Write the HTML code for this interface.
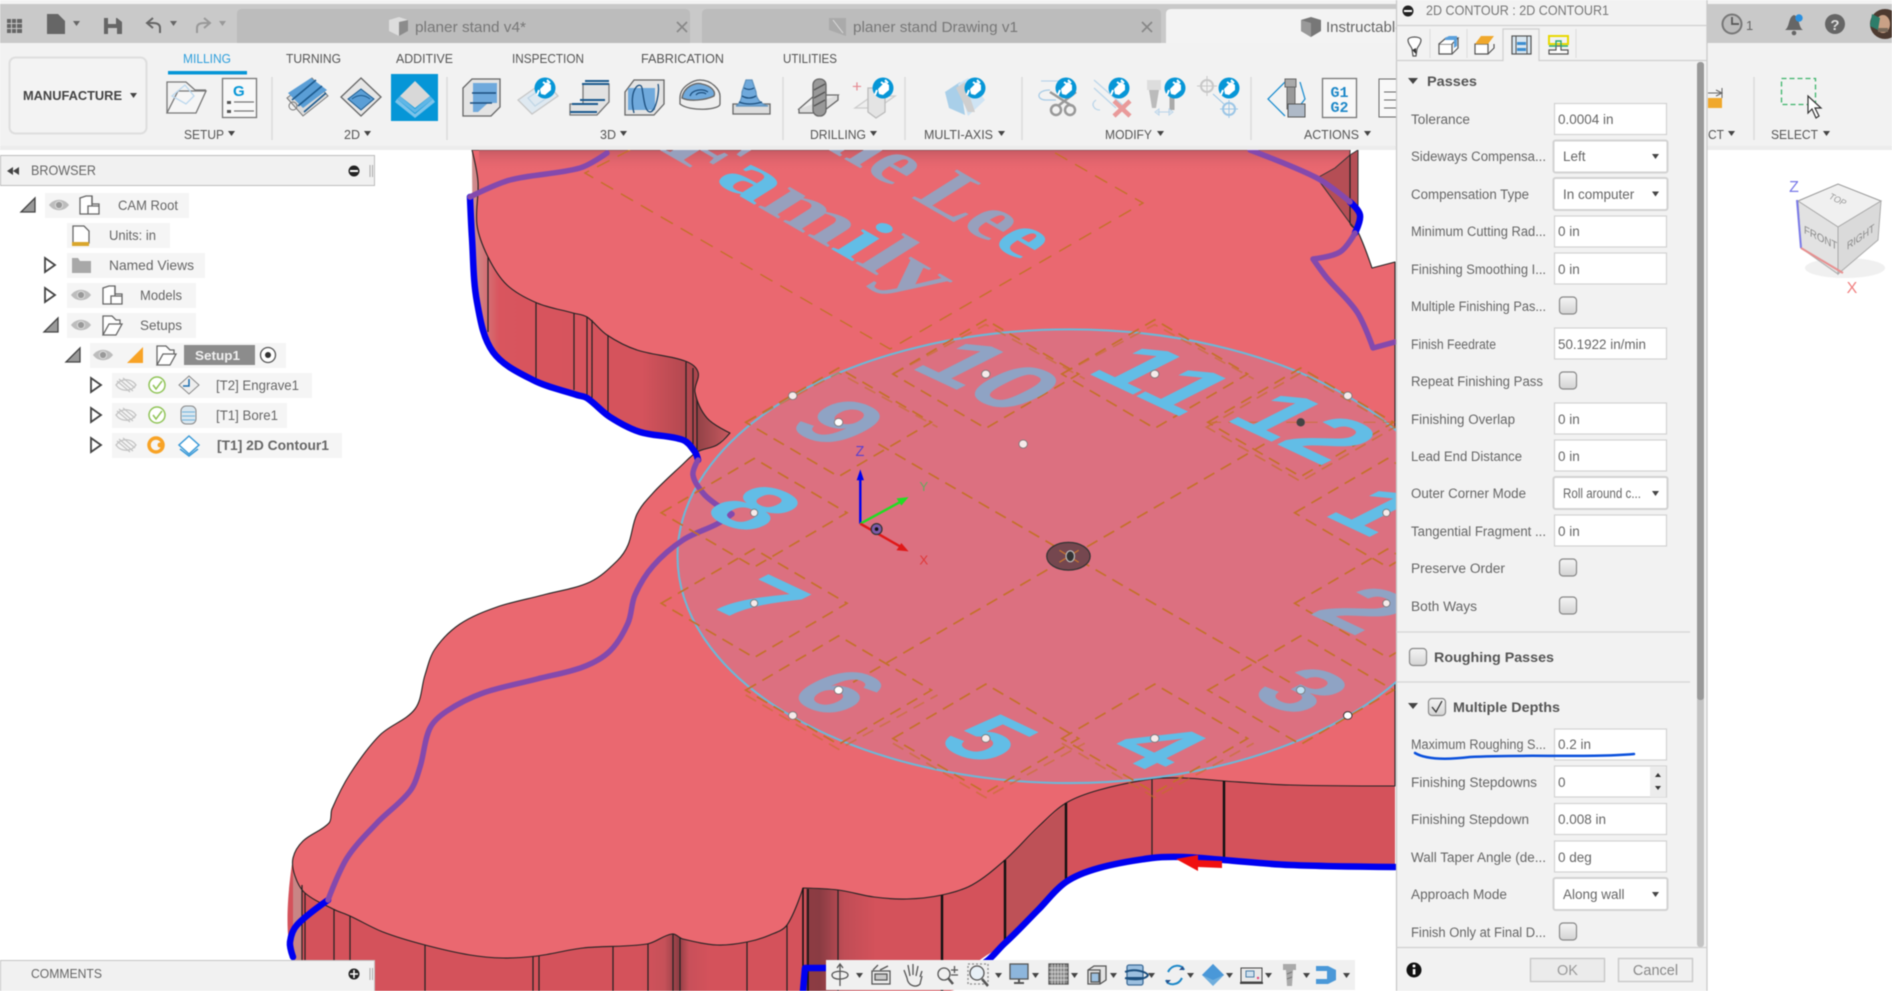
<!DOCTYPE html>
<html><head><meta charset="utf-8"><title>2D Contour</title>
<style>
html,body{margin:0;padding:0;background:#fff;width:1892px;height:991px;overflow:hidden}
svg{display:block;filter:blur(.45px);font-family:"Liberation Sans",sans-serif}
.rb{font-size:13px;fill:#555}
.lb{font-size:13.5px;fill:#666}
.v{font-size:13.5px;fill:#666}
.br{font-size:14px;fill:#666}
.n{font-family:"Liberation Sans",sans-serif;font-weight:bold;font-size:76px;text-anchor:middle}
.g{fill:#8fa3c4}.c{fill:#62bde6}
</style></head><body>
<svg width="1892" height="991" viewBox="0 0 1892 991" xmlns="http://www.w3.org/2000/svg">
<defs>
<linearGradient id="w1" x1="0" x2="1" y1="0" y2="0"><stop offset="0" stop-color="#cf9090"/><stop offset=".12" stop-color="#d9555e"/><stop offset=".75" stop-color="#d4535c"/><stop offset="1" stop-color="#a9454c"/></linearGradient>
<linearGradient id="w2" x1="0" x2="1" y1="0" y2="0"><stop offset="0" stop-color="#d4525b"/><stop offset=".35" stop-color="#c65159"/><stop offset=".55" stop-color="#8e3d44"/><stop offset=".7" stop-color="#c8505a"/><stop offset="1" stop-color="#d4525b"/></linearGradient>
<linearGradient id="w3" x1="0" x2="1" y1="0" y2="0"><stop offset="0" stop-color="#8e3d44"/><stop offset=".2" stop-color="#8a3c43"/><stop offset=".55" stop-color="#c04d56"/><stop offset="1" stop-color="#d4525b"/></linearGradient>
<linearGradient id="sp" x1="0" x2="1" y1="0" y2="0"><stop offset="0" stop-color="#8e4045"/><stop offset="1" stop-color="#c95a60"/></linearGradient>
<linearGradient id="topd" x1="0" x2="0" y1="0" y2="1"><stop offset="0" stop-color="#a84f58" stop-opacity=".55"/><stop offset="1" stop-color="#ea6870" stop-opacity="0"/></linearGradient>
<linearGradient id="cb" x1="0" x2="0" y1="0" y2="1"><stop offset="0" stop-color="#f5f5f5"/><stop offset="1" stop-color="#d4d4d4"/></linearGradient>
<g id="eye"><path d="M-10,0C-5,-7 5,-7 10,0C5,7 -5,7 -10,0Z" fill="#bdbdbd"/><circle r="3.6" fill="#999" stroke="#ddd" stroke-width="1"/></g>
<g id="eyeoff" fill="none" stroke="#c4c4c4" stroke-width="1.3"><path d="M-10,0C-5,-7 5,-7 10,0C5,7 -5,7 -10,0Z"/><path d="M-7,-6L7,6M-9,-4L4,7M-3,-7L9,3"/></g>
<path id="open" d="M0,14L14,14L14,0Z" fill="#9a9a9a" stroke="#444" stroke-width="1.3"/>
<path id="closed" d="M0,0L10,7L0,14Z" fill="#fff" stroke="#444" stroke-width="1.8"/>
<path id="dn" d="M0,0H7L3.5,5Z" fill="#444"/>
<g id="plug"><circle r="10.5" fill="#0696d7"/><path d="M-5,1L2,-6L6,-3L6,2L0,7L-4,6Z" fill="#fff"/><path d="M-2,-6L2,-3M2,-8L5,-5M-6,2L-8,7" stroke="#fff" stroke-width="2"/></g>
<g id="chk"><rect width="17" height="17" x="0" y="0" rx="3.5" fill="url(#cb)" stroke="#888" stroke-width="1.2"/></g>
</defs>

<rect width="1892" height="991" fill="#fff"/>

<!-- VIEWPORT -->
<g>
<!-- upper-left wall -->
<polygon class="sm" points="472,150 478,182 477,225 488,257 507,285 537,303 573,313 587,317 607,335 637,350 685,361 698,372 697,452 683,440 640,432 610,417 587,398 577,395 533,380 493,352 477,302" fill="url(#w1)"/>
<polygon points="695,392 707,418 730,433 717,445 697,452" fill="url(#sp)"/>
<!-- bottom wall -->
<polygon class="sm" points="293,858 295,876 305,893 333,909 350,916 383,932 425,945 470,955 503,958 537,956 583,948 647,944 672,934 683,939 717,945 747,942 770,935 787,925 803,888 838,890 874,897 907,899 942,895 972,885 1005,860 1038,827 1066,803 1099,790 1152,779 1184,778 1224,781 1290,785 1395,786 1395,867 1290,865 1224,860 1184,857 1152,858 1099,868 1066,882 1038,910 1005,943 976,963 950,991 345,991 293,960" fill="#d4525b"/>
<rect x="640" y="925" width="70" height="66" fill="url(#w2)"/>
<rect x="806" y="888" width="70" height="103" fill="url(#w3)"/>
<rect x="293" y="860" width="9" height="100" fill="#c98585"/>
<polygon points="1005,860 1066,803 1066,882 1005,943" fill="#be5157"/>
<!-- surface -->
<polygon class="sm" points="472,150 1350,150 1350,223 1358,232 1372,268 1395,262 1395,786 1290,785 1224,781 1184,778 1152,779 1099,790 1066,803 1038,827 1005,860 972,885 942,895 907,899 874,897 838,890 803,888 787,925 770,935 747,942 717,945 683,939 672,934 647,944 583,948 537,956 503,958 470,955 425,945 383,932 350,916 333,909 305,893 295,876 293,858 303,841 329,823 332,809 350,774 380,735 415,709 425,675 435,649 460,624 497,607 543,595 590,582 617,561 628,545 637,514 653,493 682,465 697,452 717,445 730,433 707,418 695,392 698,372 685,361 637,350 607,335 587,317 573,313 537,303 507,285 488,257 477,225 478,182" fill="#ea6870" stroke="#222" stroke-width="1.1" stroke-linejoin="round"/>
<rect x="479" y="150" width="871" height="22" fill="url(#topd)"/>
<!-- wedge top right -->
<polygon points="1317,178 1335,168 1350,155 1358,150 1358,232 1350,223" fill="#b54e55" stroke="#333" stroke-width="1"/>
<line x1="1350" y1="155" x2="1350" y2="223" stroke="#222" stroke-width="1.2"/>
<!-- wall verticals -->
<g stroke="#222" stroke-width="1.2">
<path d="M488,257V332M536,303V380M574,313V390M587,317V396M592,320V398M608,335V412M686,362V438M693,368V445M697,400V452"/>
<path d="M302,885V960M305,893V965M334,909V991M350,916V991M425,945V991M533,956V991M539,956V991M613,946V991M648,944V991M673,934V991M680,938V991M747,942V991M787,925V991M838,890V991M1152,779V858"/>
</g>
<g stroke="#111"><path stroke-width="1.6" d="M803,888V991M808,889V991"/><path stroke-width="2.4" d="M942,895V991M1005,860V943M1066,803V882M1224,781V860"/></g>
<!-- blue toolpath -->
<g fill="none" stroke="#0000f0" stroke-width="6.5" stroke-linejoin="round" stroke-linecap="round">
<polyline class="sm" points="470,197 472,238 477,302 493,352 533,380 577,395 587,398 610,417 640,432 683,440 695,452 698,460"/>
<polyline class="sm" points="803,991 805,968 825,968 976,966 1005,943 1038,910 1066,882 1099,868 1152,858 1184,857 1224,860 1290,865 1395,867"/>
<polyline class="sm" points="328,900 297,925 290,942 293,957"/>
<polyline points="330,990 350,990"/>
<polyline class="sm" points="1350,202 1360,215 1355,233"/>
</g>
<polygon points="1176,859 1198,855 1198,860 1222,861 1222,868 1198,867 1198,871" fill="#f01010"/>
<!-- text on surface -->
<g font-family="'Liberation Serif',serif" font-weight="bold" font-size="82">
<text transform="matrix(.866 .5 -.84 .53 658 149)" fill="#97a0bd" textLength="305" lengthAdjust="spacingAndGlyphs">F<tspan fill="#62bde6">a</tspan>m<tspan fill="#62bde6">i</tspan>ly</text>
<text transform="matrix(.866 .5 -.84 .53 1021 261)" text-anchor="end" fill="#97a0bd">The Le<tspan fill="#62bde6">e</tspan></text>
</g>
<!-- big dashed diamond around the text -->
<g fill="none" stroke="#c4702a" stroke-width="1.4" stroke-dasharray="14 9"><path d="M630,150L585,173L890,349L1143,203L1050,150"/></g>
<!-- clock -->
<g transform="scale(1.2066)">
<ellipse cx="886.5" cy="461" rx="325" ry="188" fill="#dc7080" stroke="#6cb8d8" stroke-width="1.7"/>
</g>
<g fill="none" stroke="#8449ad" stroke-width="5.5" stroke-linejoin="round" stroke-linecap="round">
<polyline class="sm" points="607,153 580,168 510,180 470,197"/>
<polyline class="sm" points="698,460 693,475 703,493 717,505 732,514 717,524 683,540 653,566 635,595 628,623 610,651 583,667 537,679 483,693 447,711 430,728 420,767 410,791 377,823 347,858 328,900"/>
<polyline class="sm" points="1250,150 1317,178 1350,202"/>
<polyline class="sm" points="1355,233 1340,252 1313,259 1327,278 1357,312 1373,348 1395,342"/>
</g>
<g transform="scale(1.2066)">
<g fill="none" stroke="#c4702a" stroke-width="1.4" stroke-dasharray="10 6">
<path d="M695,350m-77,0l77,-45l77,45l-77,45z"/>
<path d="M817,310m-77,0l77,-45l77,45l-77,45z"/>
<path d="M957,310m-77,0l77,-45l77,45l-77,45z"/>
<path d="M1078,350m-77,0l77,-45l77,45l-77,45z"/>
<path d="M625,425m-77,0l77,-45l77,45l-77,45z"/>
<path d="M625,500m-77,0l77,-45l77,45l-77,45z"/>
<path d="M695,572m-77,0l77,-45l77,45l-77,45z"/>
<path d="M817,612m-77,0l77,-45l77,45l-77,45z"/>
<path d="M957,612m-77,0l77,-45l77,45l-77,45z"/>
<path d="M1078,572m-77,0l77,-45l77,45l-77,45z"/>
<path d="M1150,425m-77,0l77,-45l77,45l-77,45z"/>
<path d="M1150,500m-77,0l77,-45l77,45l-77,45z"/>
<path d="M728,368L1070,566M1048,368L706,566"/>
<path d="M1002,350L1155,350" stroke-width="1" opacity=".7"/>
<path d="M1000,354L1078,309L1156,354L1078,399Z" opacity=".7"/>
<path d="M618,350l77,-41l82,45M740,310l77,-41l82,45M880,310l77,-41l82,45M618,576l77,45l82,-45M740,616l77,45l82,-45M880,616l77,45l82,-45" opacity=".6"/>
</g>
<g>
<text class="n g" transform="matrix(1 .47 -.97 .49 670 363)">9</text>
<text class="n g" transform="matrix(1 .47 -.97 .49 795 324)">10</text>
<text class="n c" transform="matrix(1 .47 -.97 .49 939 327)">11</text>
<text class="n c" transform="matrix(1 .47 -.97 .49 1056 367)">12</text>
<text class="n c" transform="matrix(1 .47 -.97 .49 600 434)">8</text>
<text class="n c" transform="matrix(1 .47 -.97 .49 604 510)">7</text>
<text class="n g" transform="matrix(1 .47 -.97 .49 670 586)">6</text>
<text class="n c" transform="matrix(1 .47 -.97 .49 794 625)">5</text>
<text class="n c" transform="matrix(1 .47 -.97 .49 935 631)">4</text>
<text class="n g" transform="matrix(1 .47 -.97 .49 1054 585)">3</text>
<text class="n c" transform="matrix(1 .47 -.97 .49 1116 436)">1</text>
<text class="n g" transform="matrix(1 .47 -.97 .49 1105 518)">2</text>
</g>
<g fill="#f6eaea" stroke="#777" stroke-width=".7">
<ellipse cx="695" cy="350" rx="3.5" ry="3.2" fill="#fff"/><ellipse cx="817" cy="310" rx="3.5" ry="3.2"/><ellipse cx="957" cy="310" rx="3.5" ry="3.2"/>
<ellipse cx="625" cy="425" rx="3" ry="3"/><ellipse cx="625" cy="500" rx="3" ry="3"/><ellipse cx="695" cy="572" rx="3.5" ry="3.2" fill="#fff"/>
<ellipse cx="817" cy="612" rx="3.5" ry="3.2"/><ellipse cx="957" cy="612" rx="3.5" ry="3.2"/><ellipse cx="1078" cy="572" rx="3.5" ry="3.2" fill="#bfe0f2"/>
<ellipse cx="657" cy="328" rx="3.5" ry="3.2"/><ellipse cx="1117" cy="328" rx="3.5" ry="3.2"/><ellipse cx="657" cy="593" rx="3.5" ry="3.2"/><ellipse cx="1117" cy="593" rx="3.5" ry="3.2" fill="#fff" stroke="#222"/>
<ellipse cx="848" cy="368" rx="3.5" ry="3.4"/><ellipse cx="1149" cy="425" rx="3" ry="3"/><ellipse cx="1149" cy="500" rx="3" ry="3"/>
</g>
<ellipse cx="1078" cy="350" rx="3.5" ry="3.5" fill="#444"/>
<ellipse cx="885.5" cy="461" rx="18" ry="11.5" fill="#75474f" stroke="#333" stroke-width="1"/>
<path d="M878,456L894,466M894,456L878,466" stroke="#c8762d" stroke-width="1"/>
<ellipse cx="887" cy="461" rx="3.5" ry="4.5" fill="#333" stroke="#bbb"/>
<!-- axes -->
<path d="M713,434V395" stroke="#0000f0" stroke-width="2"/><path d="M713,389l-3,9h6z" fill="#0000f0"/>
<path d="M713,434L748,415" stroke="#22dd22" stroke-width="2"/><path d="M753,412l-10,1 4,6z" fill="#22dd22"/>
<path d="M713,434L748,454" stroke="#e01818" stroke-width="2"/><path d="M753,457l-10,-1 4,-6z" fill="#e01818"/>
<ellipse cx="726.500" cy="438.500" rx="4.500" ry="4.500" fill="#7b5aa8" stroke="#333"/><circle cx="726.500" cy="438.500" r="1.500" fill="#111"/>
<text x="709" y="378" font-size="12" fill="#5a3fd0">Z</text>
<text x="762" y="407" font-size="11" fill="#6aa860">Y</text>
<text x="762" y="468" font-size="11" fill="#e03838">X</text>
</g>
</g>

<!-- TOP BAR -->
<rect x="0" y="0" width="1892" height="4" fill="#f3f3f3"/>
<rect x="0" y="4" width="1892" height="39" fill="#c9c9c9"/>
<path d="M237,43V14Q237,9 242,9H685Q690,9 690,14V43Z" fill="#bcbcbc"/>
<path d="M702,43V14Q702,9 707,9H1156Q1161,9 1161,14V43Z" fill="#bcbcbc"/>
<path d="M1166,43V14Q1166,9 1171,9H1400V43Z" fill="#f3f3f3"/>
<!-- bar icons -->
<g fill="#666"><path d="M7,19h4v4h-4zM12,19h4v4h-4zM17,19h5v4h-5zM7,24h4v4h-4zM12,24h4v4h-4zM17,24h5v4h-5zM7,29h4v4h-4zM12,29h4v4h-4zM17,29h5v4h-5z"/>
<path d="M47,14H58L65,21V34H47Z"/><path d="M73,21h7l-3.500,5z"/>
<path d="M104,18H117L122,22V34H104Z"/><rect x="108" y="18" width="8" height="6" fill="#c9c9c9"/><rect x="108" y="28" width="9" height="6" fill="#c9c9c9"/>
<path d="M170,21h7l-3.500,5z"/></g>
<path d="M160,33V28Q160,23 153,23H148M153,18L147,23L153,28" fill="none" stroke="#666" stroke-width="2"/>
<path d="M197,33V28Q197,23 204,23H209M204,18L210,23L204,28" fill="none" stroke="#999" stroke-width="2"/><path d="M219,21h7l-3.500,5z" fill="#999"/>
<path d="M389,20L399,17L408,20V31L399,36L389,31Z" fill="#ddd"/><path d="M399,22L408,20V31L399,36Z" fill="#8c8c8c"/>
<text x="415" y="32" font-size="15" fill="#777" textLength="111" lengthAdjust="spacingAndGlyphs">planer stand v4*</text>
<path d="M677,22L687,32M687,22L677,32" stroke="#888" stroke-width="1.700"/>
<path d="M829,18L846,18V36L829,30Z" fill="#aaa"/><path d="M833,20L843,33" stroke="#ddd"/>
<text x="853" y="32" font-size="15" fill="#777" textLength="165" lengthAdjust="spacingAndGlyphs">planer stand Drawing v1</text>
<path d="M1142,22L1152,32M1152,22L1142,32" stroke="#888" stroke-width="1.700"/>
<path d="M1301,20L1311,17L1321,20V31L1311,37L1301,31Z" fill="#777"/><path d="M1301,20L1311,23V37L1301,31Z" fill="#999"/>
<text x="1326" y="32" font-size="15" fill="#666" textLength="85" lengthAdjust="spacingAndGlyphs">Instructables</text>

<!-- RIBBON -->
<rect x="0" y="43" width="1892" height="103" fill="#f2f2f2"/>
<rect x="0" y="146" width="1892" height="4" fill="#ececec"/>
<rect x="9.500" y="57.500" width="137" height="76" rx="6" fill="#f3f3f3" stroke="#dedede" stroke-width="2"/>
<text x="23" y="100" font-size="13" font-weight="bold" fill="#444" textLength="99" lengthAdjust="spacingAndGlyphs">MANUFACTURE</text>
<use href="#dn" x="130" y="93"/>
<text class="rb" x="183" y="63" style="fill:#2f9fdc" textLength="48" lengthAdjust="spacingAndGlyphs">MILLING</text>
<rect x="168" y="71" width="79" height="3.500" fill="#0696d7"/>
<text class="rb" x="286" y="63" textLength="55" lengthAdjust="spacingAndGlyphs">TURNING</text>
<text class="rb" x="396" y="63" textLength="57" lengthAdjust="spacingAndGlyphs">ADDITIVE</text>
<text class="rb" x="512" y="63" textLength="72" lengthAdjust="spacingAndGlyphs">INSPECTION</text>
<text class="rb" x="641" y="63" textLength="83" lengthAdjust="spacingAndGlyphs">FABRICATION</text>
<text class="rb" x="783" y="63" textLength="54" lengthAdjust="spacingAndGlyphs">UTILITIES</text>
<g stroke="#dcdcdc" stroke-width="1.600"><path d="M272,77V140M447,77V140M783,77V140M905,77V140M1022,77V140M1251,77V140M1754,77V140"/></g>
<g>
<text class="rb" x="184" y="139" textLength="40" lengthAdjust="spacingAndGlyphs">SETUP</text><use href="#dn" x="228" y="131"/>
<text class="rb" x="344" y="139" textLength="16" lengthAdjust="spacingAndGlyphs">2D</text><use href="#dn" x="364" y="131"/>
<text class="rb" x="600" y="139" textLength="16" lengthAdjust="spacingAndGlyphs">3D</text><use href="#dn" x="620" y="131"/>
<text class="rb" x="810" y="139" textLength="56" lengthAdjust="spacingAndGlyphs">DRILLING</text><use href="#dn" x="870" y="131"/>
<text class="rb" x="924" y="139" textLength="69" lengthAdjust="spacingAndGlyphs">MULTI-AXIS</text><use href="#dn" x="998" y="131"/>
<text class="rb" x="1105" y="139" textLength="47" lengthAdjust="spacingAndGlyphs">MODIFY</text><use href="#dn" x="1157" y="131"/>
<text class="rb" x="1304" y="139" textLength="55" lengthAdjust="spacingAndGlyphs">ACTIONS</text><use href="#dn" x="1364" y="131"/>
</g>
<!-- setup icons -->
<g fill="none" stroke="#777" stroke-width="1.300"><path d="M167,113V82H186L195,90H206"/><path d="M167,113H196L206,91H178Z" fill="#f6f6f6"/><path d="M172,96L185,85L194,96L186,104Z" stroke="#bcd8ee"/>
<rect x="222.500" y="78.500" width="34" height="39" fill="#f8f8f8"/><path d="M234,102H254M234,111H254"/></g>
<rect x="227" y="101" width="4" height="3" fill="#555"/><rect x="227" y="110" width="4" height="3" fill="#555"/>
<text x="233" y="96" font-size="15" font-weight="bold" fill="#0696d7">G</text>
<!-- 2D icons -->
<g><path d="M287,98L312,78L328,96L303,116Z" fill="#dcdcdc" stroke="#777"/><path d="M288,93L311,78L327,90L303,108Z" fill="#5a9ed6"/><path d="M292,100L316,80M298,106L322,86M304,112L326,93" stroke="#1c5a8e" stroke-width="1.600"/><circle cx="293" cy="106" r="4" fill="none" stroke="#777"/>
<path d="M361,78L381,97L361,116L341,97Z" fill="#e6e6e6" stroke="#666" stroke-width="1.300"/><path d="M361,89L374,99L361,110L348,99Z" fill="#5a9ed6" stroke="#1c5a8e"/><path d="M352,99Q361,92 370,99" fill="none" stroke="#1c5a8e"/></g>
<rect x="391" y="74" width="47" height="47" fill="#0696d7"/>
<path d="M415,81L430,96L415,108L400,96Z" fill="#d8d8d8"/><path d="M397,99L415,114L433,99L435,102L415,118L395,102Z" fill="#7cc3ea"/><path d="M400,96L415,109L430,96L433,99L415,113L397,99Z" fill="#5fb6e6"/>
<!-- 3D icons -->
<g fill="none" stroke="#666" stroke-width="1.300">
<path d="M463,88L472,79H500V107L491,116H463Z" fill="#e4e4e4"/><path d="M473,83H497V103H488L478,112H473Z" fill="#6fa9dc" stroke="none"/><path d="M472,93H496M470,103H492" stroke="#1c4f7e" stroke-width="1.600"/>
<path d="M518,100L545,81L558,96L532,114Z" fill="#dfe9f1" stroke="#c7c7c7"/><path d="M528,98L544,87L551,95L535,106Z" stroke="#c0d6e6"/>
<path d="M570,115V104H583V84H609V102L597,115Z" fill="#e2e2e2" stroke="#777"/><path d="M570,112H597M572,104H598M582,84H609M585,81H609M580,100H605" stroke="#1c5a8e" stroke-width="2"/>
<path d="M625,115V92L634,80H664V104L654,115Z" fill="#e4e4e4"/><path d="M628,88H655V110H628Z" fill="#6fa9dc" stroke="none"/><path d="M634,113C628,90 640,80 642,88C644,100 645,112 650,112C656,112 660,90 658,84" stroke="#1c4f7e"/>
<path d="M680,104V98C680,86 694,80 700,80C712,80 720,90 720,96V104C720,110 690,112 680,104Z" fill="#eee"/><path d="M682,98C684,86 696,82 702,84C712,86 716,92 714,96C706,100 690,102 682,98Z" fill="#6fa9dc"/><path d="M690,96C692,90 702,88 708,92M696,95C698,92 704,92 706,94" stroke="#1c4f7e"/>
<path d="M733,104L742,104H760L770,104V114H733Z" fill="#ddd"/><path d="M736,106C740,104 742,98 742,92L746,80H752L756,92C756,98 760,104 768,106Z" fill="#6fa9dc" stroke="#5f93bf"/><path d="M742,96Q749,100 756,96M744,88Q749,91 754,88M739,102Q749,106 762,102" stroke="#1c4f7e"/>
</g>
<!-- drilling -->
<g fill="none" stroke="#666" stroke-width="1.300">
<path d="M799,109L815,95H838L821,109Z" fill="#eee"/><path d="M799,109V113H821L838,100V95" fill="#ddd"/>
<rect x="813" y="79" width="13" height="37" rx="6" fill="#999"/><path d="M814,90L825,84M814,98L825,92M814,106L825,100" stroke="#555"/>
<path d="M855,108L872,96H895L878,108Z" fill="#eee" stroke="#ccc"/><path d="M868,88H885V112L876,118L868,112Z" fill="#e4e4e4" stroke="#bbb"/>
</g>
<text x="852" y="92" font-size="17" fill="#e58a92">+</text>
<use href="#plug" x="883" y="88"/>
<use href="#plug" x="545" y="88"/>
<!-- multiaxis -->
<path d="M945,92L960,82L965,115L949,108Z" fill="#a9cfe9"/><path d="M958,84L968,78L985,100L968,116Z" fill="#cfe4f4"/><path d="M956,88L965,82L975,112L968,112Z" fill="#cfcfcf"/>
<use href="#plug" x="975" y="88"/>
<!-- modify -->
<g fill="none"><path d="M1041,81H1070" stroke="#bcd6ea" stroke-width="1.300"/><path d="M1050,90C1036,90 1036,100 1046,100H1056" stroke="#a9cce6" stroke-width="1.300"/>
<path d="M1050,92L1072,106M1076,92L1058,106" stroke="#999" stroke-width="2.500"/><circle cx="1056" cy="110" r="5" stroke="#999" stroke-width="2.500"/><circle cx="1070" cy="110" r="5" stroke="#999" stroke-width="2.500"/>
<path d="M1094,80L1126,108M1094,88L1116,108M1096,100C1090,104 1094,110 1100,110" stroke="#bcd6ea" stroke-width="1.300"/>
<path d="M1114,101L1130,116M1130,101L1114,116" stroke="#e99a9a" stroke-width="4.500"/>
<rect x="1147" y="80" width="14" height="10" fill="#ddd"/><path d="M1149,90H1159L1156,108H1152Z" fill="#bbb"/><path d="M1172,95V110" stroke="#aaa" stroke-width="5"/>
<path d="M1157,112H1171M1155,112l4,-3v6zM1173,112l-4,-3v6z" stroke="#b9d4ea"/>
<circle cx="1207" cy="86" r="6" stroke="#c8c8c8" stroke-width="2"/><path d="M1207,76V96M1197,86H1217" stroke="#c8c8c8"/><circle cx="1229" cy="109" r="6" stroke="#9cc6e6" stroke-width="2"/><path d="M1229,100V118M1220,109H1238M1213,94L1224,104" stroke="#9cc6e6"/>
</g>
<use href="#plug" x="1066" y="88"/><use href="#plug" x="1119" y="88"/><use href="#plug" x="1175" y="88"/><use href="#plug" x="1229" y="88"/>
<!-- actions -->
<g fill="none"><path d="M1285,82L1268,99L1285,116M1300,82L1305,99L1295,112" stroke="#1e8ed0" stroke-width="1.300"/>
<rect x="1285" y="79" width="11" height="8" fill="#aaa" stroke="#666"/><rect x="1287" y="87" width="8" height="22" fill="#999" stroke="#666"/><rect x="1288" y="104" width="17" height="13" fill="#aeb9c7" stroke="#555"/>
<rect x="1322.500" y="78.500" width="34" height="39" fill="#f8f8f8" stroke="#777" stroke-width="1.300"/><rect x="1379" y="79" width="22" height="38" fill="#f8f8f8" stroke="#666"/><path d="M1384,92H1398M1384,100H1398M1384,108H1398" stroke="#666"/></g>
<text x="1339.500" y="97" font-family="'Liberation Mono',monospace" font-weight="bold" font-size="15" fill="#1e88c8" text-anchor="middle">G1</text>
<text x="1339.500" y="112" font-family="'Liberation Mono',monospace" font-weight="bold" font-size="15" fill="#1e88c8" text-anchor="middle">G2</text>

<!-- right of panel ribbon -->
<text class="rb" x="1708" y="139" textLength="16" lengthAdjust="spacingAndGlyphs">CT</text><use href="#dn" x="1728" y="131"/>
<rect x="1708" y="98" width="14" height="10" fill="#f0a82c"/><path d="M1708,93H1722M1722,88V98M1716,90L1722,93L1716,96" stroke="#666" fill="none"/>
<rect x="1781.500" y="78.500" width="34" height="26" fill="none" stroke="#3cb46a" stroke-width="1.300" stroke-dasharray="5 3"/>
<path d="M1808,96V113L1812,109L1816,118L1819,116L1815,108H1821Z" fill="#fff" stroke="#333" stroke-width="1.200"/>
<text class="rb" x="1771" y="139" textLength="47" lengthAdjust="spacingAndGlyphs">SELECT</text><use href="#dn" x="1823" y="131"/>
<!-- right bar icons -->
<circle cx="1732" cy="24" r="9.500" fill="#bbb" stroke="#777" stroke-width="2"/><path d="M1732,17V24H1739" fill="none" stroke="#555" stroke-width="1.700"/>
<text x="1746" y="30" font-size="13" fill="#666">1</text>
<path d="M1785,30C1790,27 1788,17 1794,15C1800,17 1798,27 1803,30Z" fill="#666"/><circle cx="1794" cy="33" r="2.300" fill="#666"/><circle cx="1799" cy="18" r="3.700" fill="#2a90e0"/>
<circle cx="1835" cy="24" r="10" fill="#666"/><text x="1835" y="30" font-size="15" font-weight="bold" fill="#ddd" text-anchor="middle">?</text>
<circle cx="1885" cy="24" r="15" fill="#4d3a30"/><ellipse cx="1883" cy="24" rx="7" ry="9" fill="#c9a186"/><path d="M1872,14L1880,18L1878,30L1870,26Z" fill="#2d7d6a"/><path d="M1878,28h10v4h-10z" fill="#7a6a5a"/>

<!-- VIEWCUBE -->
<ellipse cx="1845" cy="268" rx="40" ry="10" fill="#e6e6e6" opacity=".6"/>
<path d="M1798,201L1838,184L1881,201L1838,227Z" fill="#f0f0f0" stroke="#999"/>
<path d="M1798,201L1838,227V274L1801,248Z" fill="#e2e2e2" stroke="#aaa"/>
<path d="M1838,227L1881,201L1878,240L1838,274Z" fill="#dadada" stroke="#aaa"/>
<text transform="matrix(.86 .45 -.6 .8 1828 198)" font-size="9" fill="#999">TOP</text>
<text transform="matrix(.88 .45 0 1 1804 233)" font-size="11" fill="#888">FRONT</text>
<text transform="matrix(.8 -.55 0 1 1847 250)" font-size="11" fill="#888">RIGHT</text>
<path d="M1797,200L1801,248" stroke="#7a7ae8" stroke-width="2"/><path d="M1801,248L1843,273" stroke="#e89090" stroke-width="2"/>
<text x="1794" y="192" font-size="16" fill="#7a7ae8" text-anchor="middle">Z</text>
<text x="1852" y="293" font-size="16" fill="#f08080" text-anchor="middle">X</text>

<!-- BROWSER -->
<rect x="0.500" y="155.500" width="374" height="30" fill="#f1f1f1" stroke="#bdbdbd"/>
<path d="M7,171L13,167V175ZM13,171L19,167V175Z" fill="#444"/>
<text x="31" y="175" font-size="14" fill="#666" textLength="65" lengthAdjust="spacingAndGlyphs">BROWSER</text>
<circle cx="354" cy="171" r="5.500" fill="#222"/><rect x="350" y="170" width="8" height="2" fill="#fff"/>
<path d="M370,165V177M372.500,165V177" stroke="#aaa"/>
<g fill="#f5f5f5"><rect x="45" y="193" width="144" height="25"/><rect x="67" y="223" width="103" height="25"/><rect x="67" y="253" width="138" height="25"/><rect x="67" y="283" width="129" height="25"/><rect x="67" y="313" width="129" height="25"/><rect x="90" y="343" width="196" height="25"/><rect x="112" y="373" width="200" height="25"/><rect x="112" y="403" width="175" height="25"/><rect x="112" y="433" width="230" height="25"/></g>
<use href="#open" x="21" y="198"/><use href="#closed" x="45" y="258"/><use href="#closed" x="45" y="288"/><use href="#open" x="44" y="318"/><use href="#open" x="66" y="348"/><use href="#closed" x="91" y="378"/><use href="#closed" x="91" y="408"/><use href="#closed" x="91" y="438"/>
<use href="#eye" x="59" y="205"/><use href="#eye" x="81" y="295"/><use href="#eye" x="81" y="325"/><use href="#eye" x="103" y="355"/>
<use href="#eyeoff" x="126" y="385"/><use href="#eyeoff" x="126" y="415"/><use href="#eyeoff" x="126" y="445"/>
<g fill="none" stroke="#666" stroke-width="1.300">
<path d="M80,214V198L86,196H92V204H99V214Z" fill="#fff"/><path d="M88,214V206H99M92,196V206"/>
<path d="M103,304V288L109,286H115V294H122V304Z" fill="#fff"/><path d="M111,304V296H122M115,286V296"/>
<path d="M73,226H84L89,231V243H73Z" fill="#fff"/>
<path d="M103,335V316H112L116,320H120V324" fill="#fff"/><path d="M103,335H116L122,324H109Z" fill="#fff"/>
<path d="M157,365V346H166L170,350H174V354" fill="#fff"/><path d="M157,365H170L176,354H163Z" fill="#fff"/>
</g>
<rect x="72" y="242" width="17" height="4" fill="#d9a62c"/>
<path d="M72,258H78L80,261H91V273H72Z" fill="#a8a8a8"/>
<path d="M127,363L143,347V363Z" fill="#f8a326"/>
<rect x="184" y="345" width="71" height="20" fill="#8c8c8c"/>
<text x="195" y="360" font-size="13" font-weight="bold" fill="#f0f0f0" textLength="45" lengthAdjust="spacingAndGlyphs">Setup1</text>
<circle cx="268" cy="355" r="7.500" fill="#fff" stroke="#555" stroke-width="1.300"/><circle cx="268" cy="355" r="3" fill="#333"/>
<g fill="none"><circle cx="157" cy="385" r="8" stroke="#90c458" stroke-width="1.500" fill="#fff"/><path d="M153,385L156,389L162,381" stroke="#90c458" stroke-width="1.500"/>
<circle cx="157" cy="415" r="8" stroke="#90c458" stroke-width="1.500" fill="#fff"/><path d="M153,415L156,419L162,411" stroke="#90c458" stroke-width="1.500"/></g>
<circle cx="156" cy="445" r="7" fill="none" stroke="#f8a326" stroke-width="3.500"/><circle cx="160" cy="445" r="2.500" fill="#f8a326"/>
<path d="M189,376L199,385L189,394L179,385Z" fill="#eee" stroke="#888"/><path d="M189,379V386H183" fill="none" stroke="#1c6eb0" stroke-width="1.500"/>
<rect x="181" y="406" width="15" height="18" rx="5" fill="#d8e6ef" stroke="#888"/><path d="M182,412H195M182,416H195M182,420H195" stroke="#6fb3dc"/>
<path d="M189,436L199,445L189,454L179,445Z" fill="#fff" stroke="#3a9ad8" stroke-width="1.500"/><path d="M180,449L189,456L198,449" fill="none" stroke="#3a9ad8" stroke-width="1.500"/>
<g>
<text class="br" x="118" y="210" textLength="60" lengthAdjust="spacingAndGlyphs">CAM Root</text>
<text class="br" x="109" y="240" textLength="47" lengthAdjust="spacingAndGlyphs">Units: in</text>
<text class="br" x="109" y="270" textLength="85" lengthAdjust="spacingAndGlyphs">Named Views</text>
<text class="br" x="140" y="300" textLength="42" lengthAdjust="spacingAndGlyphs">Models</text>
<text class="br" x="140" y="330" textLength="42" lengthAdjust="spacingAndGlyphs">Setups</text>
<text class="br" x="216" y="390" textLength="83" lengthAdjust="spacingAndGlyphs">[T2] Engrave1</text>
<text class="br" x="216" y="420" textLength="62" lengthAdjust="spacingAndGlyphs">[T1] Bore1</text>
<text class="br" x="217" y="450" font-weight="bold" textLength="112" lengthAdjust="spacingAndGlyphs">[T1] 2D Contour1</text>
</g>
<!-- COMMENTS -->
<rect x="0.500" y="960.500" width="374" height="31" fill="#f1f1f1" stroke="#c4c4c4"/>
<text x="31" y="978" font-size="13" fill="#666" textLength="71" lengthAdjust="spacingAndGlyphs">COMMENTS</text>
<circle cx="354" cy="974" r="5.500" fill="#222"/><path d="M350,974H358M354,970V978" stroke="#fff" stroke-width="1.500"/>
<path d="M370,968V980M372.500,968V980" stroke="#aaa"/>

<!-- BOTTOM TOOLBAR -->
<rect x="826" y="960" width="529" height="30" fill="#f0f0f0"/>
<g fill="none" stroke="#555" stroke-width="1.300">
<path d="M840,964V986M832,975C832,970 848,970 848,975C848,980 832,981 832,975"/><path d="M837,968L840,964L843,968"/>
<rect x="872" y="971" width="18" height="13"/><rect x="875" y="974" width="12" height="6" fill="#c8c8c8"/><path d="M873,970L878,965M880,970L888,966"/>
<path d="M907,978L904,970M910,976L908,965M913,975V964M916,976L918,966M920,977L922,971M907,978C908,986 916,988 920,984L922,976"/>
<circle cx="944" cy="974" r="6"/><path d="M948,978L953,984" stroke-width="2.500"/><path d="M951,970H958M954.500,966V973M951,975H958"/>
<rect x="968" y="964" width="20" height="20" stroke-dasharray="2 2" stroke="#888"/><circle cx="977" cy="973" r="7" fill="#e8f0f6"/><path d="M982,979L988,986" stroke-width="2.500"/>
<rect x="1010" y="964" width="18" height="15" fill="#8db6dc"/><path d="M1014,983H1024M1019,979V983" stroke-width="2"/>
<rect x="1049" y="964" width="19" height="20" fill="#888"/><path d="M1052,964V984M1055,964V984M1058,964V984M1061,964V984M1064,964V984M1049,968H1068M1049,972H1068M1049,976H1068M1049,980H1068" stroke="#ddd" stroke-width=".7"/>
<path d="M1088,970L1094,966H1106V980L1100,984H1088Z" fill="#e4e4e4"/><path d="M1088,970H1100V984"/><rect x="1091" y="973" width="8" height="9" fill="#9cc0e0"/>
<rect x="1127" y="965" width="16" height="20" rx="2" fill="#9cc0e0" stroke="#3c6a96"/><path d="M1125,972C1135,968 1146,972 1148,975C1146,980 1132,980 1125,978M1127,978H1143" stroke="#1c4f7e" stroke-width="2"/>
<path d="M1168,972C1172,964 1182,964 1184,970M1182,978C1178,986 1168,986 1166,980" stroke="#1e88c8" stroke-width="2"/>
</g>
<path d="M1184,970l-5,0 4,-4zM1166,980l5,0 -4,4z" fill="#2a4f88"/>
<path d="M1213,964L1224,975L1213,986L1202,975Z" fill="#6faedd"/><path d="M1213,964L1224,975L1213,980L1202,975Z" fill="#4a98d8"/>
<rect x="1241" y="968" width="21" height="14" fill="#e8e8e8" stroke="#444"/><rect x="1246" y="971" width="8" height="6" fill="#cfe0ee" stroke="#4a7ea8"/><rect x="1240" y="982" width="23" height="2" fill="#444"/><circle cx="1258" cy="978" r="1.200" fill="#e0457a"/>
<path d="M1283,964H1296V970H1293L1292,986H1287L1286,970H1283Z" fill="#aaa"/><path d="M1287,974L1292,972M1287,979L1292,977" stroke="#777"/>
<path d="M1320,966H1328L1336,970V980L1328,984H1320V979H1327V971H1320Z" fill="#4a98d8"/><path d="M1316,966H1322V971H1316ZM1316,979H1322V984H1316Z" fill="#4a98d8"/>
<use href="#dn" x="856" y="973"/><use href="#dn" x="995" y="973"/><use href="#dn" x="1032" y="973"/><use href="#dn" x="1071" y="973"/><use href="#dn" x="1110" y="973"/><use href="#dn" x="1148" y="973"/><use href="#dn" x="1187" y="973"/><use href="#dn" x="1226" y="973"/><use href="#dn" x="1265" y="973"/><use href="#dn" x="1303" y="973"/><use href="#dn" x="1343" y="973"/>

<!-- PANEL -->
<rect x="1396" y="0" width="311" height="991" fill="#f2f2f2"/>
<path d="M1396.500,0V991M1707,0V991" stroke="#c8c8c8" stroke-width="1.200"/>
<circle cx="1408" cy="11" r="5.500" fill="#222"/><rect x="1404" y="10" width="8" height="2" fill="#fff"/>
<text x="1426" y="15" font-size="14" fill="#777" textLength="183" lengthAdjust="spacingAndGlyphs">2D CONTOUR : 2D CONTOUR1</text>
<path d="M1396,25.500H1707" stroke="#cfcfcf" stroke-width="1.200"/>
<path d="M1396,60.500H1503V29H1539V60.500H1707" stroke="#cfcfcf" stroke-width="1.200" fill="none"/>
<path d="M1430,29V58M1467,29V58M1576,29V58" stroke="#dcdcdc"/>
<path d="M1408,40C1408,36 1421,36 1421,40C1421,44 1418,46 1417,49L1416,56H1413L1412,49C1411,46 1408,44 1408,40Z" fill="#fff" stroke="#555" stroke-width="1.200"/>
<path d="M1412,50L1416,48V54Z" fill="#333"/>
<g fill="#fff" stroke="#555" stroke-width="1.200"><path d="M1439,44H1452V54H1439Z"/><path d="M1439,44L1446,38H1458L1452,44"/><path d="M1452,54L1458,48V38"/></g><path d="M1445,38L1449,36H1457V46L1454,48V40H1445Z" fill="#5aa0dc"/>
<g fill="#fff" stroke="#555" stroke-width="1.200"><path d="M1475,44H1488V54H1475Z"/><path d="M1488,54L1494,48V44"/></g><path d="M1475,44L1481,36H1494L1488,44Z" fill="#f0a82c"/>
<rect x="1512" y="36" width="19" height="18" fill="#d8e6f1" stroke="#555" stroke-width="1.200"/><path d="M1516,36V54M1527,36V54" stroke="#555"/><rect x="1517" y="42" width="9" height="3" fill="#3c8ed0"/><rect x="1517" y="48" width="9" height="3" fill="#3c8ed0"/>
<rect x="1549" y="36" width="19" height="8" fill="none" stroke="#e8d800" stroke-width="2"/><path d="M1549,54H1568V50H1561V46H1556V50H1549Z" fill="#fff" stroke="#555" stroke-width="1.200"/><path d="M1549,46H1556V41H1561V46H1568" stroke="#28a870" stroke-width="1.400" fill="none"/>
<!-- scrollbar -->
<rect x="1697" y="62" width="7" height="885" rx="3" fill="#c3c3c3"/>
<rect x="1697" y="62" width="7" height="638" rx="3" fill="#999"/>
<!-- passes -->
<path d="M1408,78H1418L1413,84Z" fill="#444"/>
<text x="1427" y="86" font-size="14" font-weight="bold" fill="#555" textLength="50" lengthAdjust="spacingAndGlyphs">Passes</text>
<!-- rows -->
<g>
<text class="lb" x="1411" y="124" textLength="59" lengthAdjust="spacingAndGlyphs">Tolerance</text>
<text class="lb" x="1411" y="161" textLength="135" lengthAdjust="spacingAndGlyphs">Sideways Compensa...</text>
<text class="lb" x="1411" y="199" textLength="118" lengthAdjust="spacingAndGlyphs">Compensation Type</text>
<text class="lb" x="1411" y="236" textLength="135" lengthAdjust="spacingAndGlyphs">Minimum Cutting Rad...</text>
<text class="lb" x="1411" y="274" textLength="135" lengthAdjust="spacingAndGlyphs">Finishing Smoothing I...</text>
<text class="lb" x="1411" y="311" textLength="135" lengthAdjust="spacingAndGlyphs">Multiple Finishing Pas...</text>
<text class="lb" x="1411" y="349" textLength="85" lengthAdjust="spacingAndGlyphs">Finish Feedrate</text>
<text class="lb" x="1411" y="386" textLength="132" lengthAdjust="spacingAndGlyphs">Repeat Finishing Pass</text>
<text class="lb" x="1411" y="424" textLength="104" lengthAdjust="spacingAndGlyphs">Finishing Overlap</text>
<text class="lb" x="1411" y="461" textLength="111" lengthAdjust="spacingAndGlyphs">Lead End Distance</text>
<text class="lb" x="1411" y="498" textLength="115" lengthAdjust="spacingAndGlyphs">Outer Corner Mode</text>
<text class="lb" x="1411" y="536" textLength="135" lengthAdjust="spacingAndGlyphs">Tangential Fragment ...</text>
<text class="lb" x="1411" y="573" textLength="94" lengthAdjust="spacingAndGlyphs">Preserve Order</text>
<text class="lb" x="1411" y="611" textLength="66" lengthAdjust="spacingAndGlyphs">Both Ways</text>
<text class="lb" x="1411" y="749" textLength="135" lengthAdjust="spacingAndGlyphs">Maximum Roughing S...</text>
<text class="lb" x="1411" y="787" textLength="126" lengthAdjust="spacingAndGlyphs">Finishing Stepdowns</text>
<text class="lb" x="1411" y="824" textLength="118" lengthAdjust="spacingAndGlyphs">Finishing Stepdown</text>
<text class="lb" x="1411" y="862" textLength="135" lengthAdjust="spacingAndGlyphs">Wall Taper Angle (de...</text>
<text class="lb" x="1411" y="899" textLength="96" lengthAdjust="spacingAndGlyphs">Approach Mode</text>
<text class="lb" x="1411" y="937" textLength="135" lengthAdjust="spacingAndGlyphs">Finish Only at Final D...</text>
</g>
<g fill="#fff" stroke="#d2d2d2" stroke-width="1.200">
<rect x="1554.500" y="103.500" width="112" height="31"/>
<rect x="1553.500" y="140.500" width="114" height="32" rx="2" stroke-width="2"/>
<rect x="1553.500" y="178" width="114" height="32" rx="2" stroke-width="2"/>
<rect x="1554.500" y="216" width="112" height="31"/>
<rect x="1554.500" y="253" width="112" height="31"/>
<rect x="1554.500" y="328" width="112" height="31"/>
<rect x="1554.500" y="403" width="112" height="31"/>
<rect x="1554.500" y="440" width="112" height="31"/>
<rect x="1553.500" y="477" width="114" height="32" rx="2" stroke-width="2"/>
<rect x="1554.500" y="515" width="112" height="31"/>
<rect x="1554.500" y="729" width="112" height="31"/>
<rect x="1554.500" y="766" width="112" height="31"/>
<rect x="1554.500" y="803.500" width="112" height="31"/>
<rect x="1554.500" y="841" width="112" height="31"/>
<rect x="1553.500" y="878" width="114" height="32" rx="2" stroke-width="2"/>
</g>
<rect x="1650" y="767" width="16" height="30" fill="#ececec"/>
<path d="M1655,777L1658,773L1661,777Z M1655,786L1658,790L1661,786Z" fill="#333"/>
<g>
<text class="v" x="1558" y="124">0.0004 in</text>
<text class="v" x="1563" y="161">Left</text>
<text class="v" x="1563" y="199">In computer</text>
<text class="v" x="1558" y="236">0 in</text>
<text class="v" x="1558" y="274">0 in</text>
<text class="v" x="1558" y="349" textLength="88" lengthAdjust="spacingAndGlyphs">50.1922 in/min</text>
<text class="v" x="1558" y="424">0 in</text>
<text class="v" x="1558" y="461">0 in</text>
<text class="v" x="1563" y="498" textLength="78" lengthAdjust="spacingAndGlyphs">Roll around c...</text>
<text class="v" x="1558" y="536">0 in</text>
<text class="v" x="1558" y="749">0.2 in</text>
<text class="v" x="1558" y="787">0</text>
<text class="v" x="1558" y="824">0.008 in</text>
<text class="v" x="1558" y="862">0 deg</text>
<text class="v" x="1563" y="899">Along wall</text>
</g>
<use href="#dn" x="1652" y="154"/><use href="#dn" x="1652" y="191.500"/><use href="#dn" x="1652" y="491"/><use href="#dn" x="1652" y="892"/>
<use href="#chk" x="1559.500" y="297"/><use href="#chk" x="1559.500" y="372"/><use href="#chk" x="1559.500" y="559"/><use href="#chk" x="1559.500" y="597"/><use href="#chk" x="1559.500" y="923"/>
<path d="M1396,632H1690M1396,682H1690" stroke="#d4d4d4" stroke-width="1.200"/>
<use href="#chk" x="1409.500" y="648.500"/>
<text x="1434" y="662" font-size="14" font-weight="bold" fill="#555" textLength="120" lengthAdjust="spacingAndGlyphs">Roughing Passes</text>
<path d="M1408,703H1418L1413,709Z" fill="#444"/>
<use href="#chk" x="1428.500" y="698.500"/><path d="M1432,707L1436,712L1442,701" fill="none" stroke="#333" stroke-width="1.300"/>
<text x="1453" y="712" font-size="14" font-weight="bold" fill="#555" textLength="107" lengthAdjust="spacingAndGlyphs">Multiple Depths</text>
<path d="M1415,753C1425,759 1445,760 1470,757C1520,754 1590,758 1634,754" fill="none" stroke="#0a50dc" stroke-width="2.500" stroke-linecap="round"/>
<path d="M1396,947.500H1707" stroke="#cfcfcf" stroke-width="1.200"/>
<circle cx="1414" cy="970" r="7.500" fill="#111"/><rect x="1412.800" y="969" width="2.600" height="5.500" fill="#fff"/><circle cx="1414" cy="966" r="1.500" fill="#fff"/>
<rect x="1530.500" y="958.500" width="74" height="23" fill="#ebebeb" stroke="#c8c8c8" stroke-width="1.400"/>
<text x="1567.500" y="975" font-size="14.500" fill="#999" text-anchor="middle">OK</text>
<rect x="1618.500" y="958.500" width="74" height="23" fill="#f0f0f0" stroke="#c8c8c8" stroke-width="1.400"/>
<text x="1655.500" y="975" font-size="14.500" fill="#888" text-anchor="middle">Cancel</text>
</svg>
<script>
document.querySelectorAll('.sm').forEach(function(el){
  var p=el.getAttribute('points').trim().split(/\s+/).map(function(s){return s.split(',').map(Number)});
  var closed=el.tagName==='polygon',n=p.length;
  function tan(i){
    var a=p[closed?(i-1+n)%n:i-1],b=p[closed?(i+1)%n:i+1];
    if(!a||!b)return null;
    var c=p[i],ux=c[0]-a[0],uy=c[1]-a[1],vx=b[0]-c[0],vy=b[1]-c[1];
    var lu=Math.hypot(ux,uy),lv=Math.hypot(vx,vy);
    if((ux*vx+uy*vy)/(lu*lv)<.35)return null;
    var tx=b[0]-a[0],ty=b[1]-a[1],l=Math.hypot(tx,ty);
    return [tx/l,ty/l];
  }
  var d='M'+p[0].join(','),m=closed?n:n-1;
  for(var i=0;i<m;i++){
    var j=(i+1)%n,s=Math.hypot(p[j][0]-p[i][0],p[j][1]-p[i][1])/3,t0=tan(i),t1=tan(j);
    var c1=t0?[p[i][0]+t0[0]*s,p[i][1]+t0[1]*s]:p[i],c2=t1?[p[j][0]-t1[0]*s,p[j][1]-t1[1]*s]:p[j];
    d+='C'+c1[0].toFixed(1)+','+c1[1].toFixed(1)+' '+c2[0].toFixed(1)+','+c2[1].toFixed(1)+' '+p[j][0]+','+p[j][1];
  }
  if(closed)d+='Z';
  var q=document.createElementNS('http://www.w3.org/2000/svg','path');
  for(var k=0;k<el.attributes.length;k++){var at=el.attributes[k];if(at.name!=='points'&&at.name!=='class')q.setAttribute(at.name,at.value)}
  q.setAttribute('d',d);
  el.parentNode.replaceChild(q,el);
});
</script>
</body></html>
